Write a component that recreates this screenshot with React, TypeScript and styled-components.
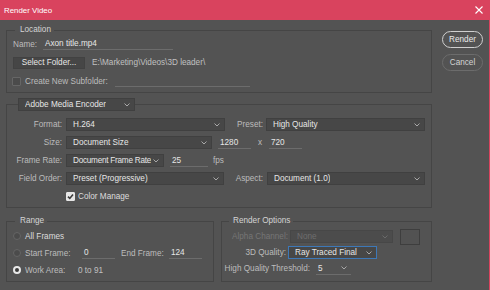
import React, { FC } from "react"
import styled, { createGlobalStyle, css } from "styled-components"

const GlobalStyle = createGlobalStyle`
  html, body {
    margin: 0;
    padding: 0;
    background: #535353;
  }
  * {
    box-sizing: border-box;
  }
`

const PINK = "#d9435e"

//---------------------------PARTS-------------------------------------------//

const Chevron: FC<{ dim?: boolean }> = ({ dim }) => (
  <svg width="6" height="4" viewBox="0 0 6 4">
    <polyline points="0.5,0.5 3,3 5.5,0.5" fill="none" stroke={dim ? "#6a6a6a" : "#a8a8a8"} strokeWidth="1" />
  </svg>
)

interface ISelect {
  w: number
  value: string
  focused?: boolean
  disabled?: boolean
  tight?: boolean
}

const Select: FC<ISelect> = ({ w, value, focused, disabled, tight }) => (
  <SelectBox $w={w} $focused={focused} $disabled={disabled} $tight={tight}>
    <SelectText>{value}</SelectText>
    <Chevron dim={disabled} />
  </SelectBox>
)

const Check: FC<{ checked?: boolean }> = ({ checked }) => (
  <CheckBox $checked={checked}>
    {checked && (
      <svg width="7" height="7" viewBox="0 0 7 7">
        <polyline points="1,3.6 2.8,5.4 6,1.4" fill="none" stroke="#3a3a3a" strokeWidth="1.6" />
      </svg>
    )}
  </CheckBox>
)

export default function App() {
  return (
    <>
      <GlobalStyle />
      <Dialog>
        <TitleBar>
          <Title>Render Video</Title>
          <svg width="8" height="8" viewBox="0 0 8 8">
            <path d="M0.5,0.5 L7.5,7.5 M7.5,0.5 L0.5,7.5" stroke="#fff" strokeWidth="1.1" />
          </svg>
        </TitleBar>

        <Body>
          <Main>
            <Group>
              <Legend $ml={8}>Location</Legend>
              <GroupInner $pt={3} $pb={5} $pl={6} $gap={6}>
                <Row $h={12}>
                  <Label $w={30} $left>Name:</Label>
                  <UInput $w={130}>Axon title.mp4</UInput>
                </Row>
                <Row $h={13}>
                  <Button>Select Folder...</Button>
                  <Path>E:\Marketing\Videos\3D leader\</Path>
                </Row>
                <Row $h={12} style={{ marginLeft: -1 }}>
                  <Check />
                  <Label $w={90} $left $ml={4}>Create New Subfolder:</Label>
                  <UInput $w={135} />
                </Row>
              </GroupInner>
            </Group>

            <Group $mt={5}>
              <SelectLegend>
                <Select w={117} value="Adobe Media Encoder" />
              </SelectLegend>
              <GroupInner $pt={7} $pb={4} $pl={0} $gap={5}>
                <Row $h={13}>
                  <Label $w={55} $mr={4}>Format:</Label>
                  <Select w={159} value="H.264" />
                  <Label $w={38} $mr={3}>Preset:</Label>
                  <Select w={159} value="High Quality" />
                </Row>
                <Row $h={13}>
                  <Label $w={55} $mr={4}>Size:</Label>
                  <Select w={146} value="Document Size" />
                  <UInput $w={33} $ml={6}>1280</UInput>
                  <Times>x</Times>
                  <UInput $w={33}>720</UInput>
                </Row>
                <Row $h={13}>
                  <Label $w={55} $mr={4}>Frame Rate:</Label>
                  <Select w={98} value="Document Frame Rate" tight />
                  <UInput $w={38} $ml={6}>25</UInput>
                  <Label $w={20} $left $ml={5}>fps</Label>
                </Row>
                <Row $h={13}>
                  <Label $w={55} $mr={4}>Field Order:</Label>
                  <Select w={158} value="Preset (Progressive)" />
                  <Label $w={39} $mr={4}>Aspect:</Label>
                  <Select w={158} value="Document (1.0)" />
                </Row>
                <Row $h={13} style={{ paddingLeft: 59 }}>
                  <Check checked />
                  <Value $ml={3}>Color Manage</Value>
                </Row>
              </GroupInner>
            </Group>

            <BottomRow>
              <Group $w={208}>
                <Legend $ml={8}>Range</Legend>
                <GroupInner $pt={4} $pb={5} $pl={6} $gap={5}>
                  <Row $h={12}>
                    <Radio />
                    <Value $ml={4}>All Frames</Value>
                  </Row>
                  <Row $h={12}>
                    <Radio />
                    <Label $w={57} $left $ml={4}>Start Frame:</Label>
                    <UInput $w={33}>0</UInput>
                    <Label $w={48} $left $ml={6}>End Frame:</Label>
                    <UInput $w={33}>124</UInput>
                  </Row>
                  <Row $h={12}>
                    <Radio $checked />
                    <Label $w={53} $left $ml={4}>Work Area:</Label>
                    <Path style={{ marginLeft: 0 }}>0 to 91</Path>
                  </Row>
                </GroupInner>
              </Group>

              <Group $w={211}>
                <Legend $ml={7} $pl={4}>Render Options</Legend>
                <GroupInner $pt={4} $pb={6} $pl={0} $gap={3}>
                  <Row $h={13}>
                    <Label $w={66} $mr={2} $disabled>Alpha Channel:</Label>
                    <Select w={103} value="None" disabled />
                    <Swatch />
                  </Row>
                  <Row $h={13}>
                    <Label $w={64} $mr={2}>3D Quality:</Label>
                    <Select w={89} value="Ray Traced Final" focused />
                  </Row>
                  <Row $h={13}>
                    <Label $w={88} $mr={6}>High Quality Threshold:</Label>
                    <USelect>
                      <span>5</span>
                      <Chevron />
                    </USelect>
                  </Row>
                </GroupInner>
              </Group>
            </BottomRow>
          </Main>

          <Side>
            <PillButton $primary>Render</PillButton>
            <PillButton>Cancel</PillButton>
          </Side>
        </Body>
      </Dialog>
    </>
  )
}

//---------------------------STYLES-------------------------------------------//

const Dialog = styled.div`
  width: 490px;
  height: 290px;
  display: flex;
  flex-direction: column;
  background: #535353;
  border-right: 1px solid ${PINK};
  font-family: "Liberation Sans", Arial, sans-serif;
  font-size: 8.2px;
  color: #e2e2e2;
  overflow: hidden;
`

const TitleBar = styled.div`
  height: 20px;
  flex-shrink: 0;
  background: ${PINK};
  display: flex;
  align-items: center;
  justify-content: space-between;
  padding: 0 6px 0 4px;
`

const Title = styled.span`
  color: #fff;
  font-size: 7.9px;
`

const Body = styled.div`
  flex: 1;
  display: flex;
`

const Main = styled.div`
  width: 432px;
  padding: 5px 0 0 6px;
  display: flex;
  flex-direction: column;
`

const Side = styled.div`
  margin-left: 10px;
  padding-top: 11px;
  display: flex;
  flex-direction: column;
  gap: 6px;
`

const Group = styled.fieldset<{ $w?: number; $mt?: number }>`
  margin: ${p => p.$mt || 0}px 0 0 0;
  padding: 0;
  min-width: 0;
  width: ${p => (p.$w ? `${p.$w}px` : "auto")};
  border: 1px solid #454545;
`

const Legend = styled.legend<{ $ml: number; $pl?: number }>`
  margin-left: ${p => p.$ml}px;
  padding: 0 3px 0 ${p => p.$pl ?? 5}px;
  line-height: 10px;
  color: #d4d4d4;
`

const SelectLegend = styled.legend`
  margin-left: 11px;
  padding: 0;
  line-height: 0;
`

const GroupInner = styled.div<{ $pt: number; $pb: number; $pl: number; $gap: number }>`
  display: flex;
  flex-direction: column;
  gap: ${p => p.$gap}px;
  padding: ${p => p.$pt}px 0 ${p => p.$pb}px ${p => p.$pl}px;
`

const Row = styled.div<{ $h: number }>`
  height: ${p => p.$h}px;
  display: flex;
  align-items: center;
  white-space: nowrap;
`

const BottomRow = styled.div`
  margin-top: 8px;
  display: flex;
  gap: 7px;
`

interface ILabel {
  $w: number
  $left?: boolean
  $mr?: number
  $ml?: number
  $disabled?: boolean
}

const Label = styled.span<ILabel>`
  flex-shrink: 0;
  width: ${p => p.$w}px;
  margin-right: ${p => p.$mr || 0}px;
  margin-left: ${p => p.$ml || 0}px;
  text-align: ${p => (p.$left ? "left" : "right")};
  color: ${p => (p.$disabled ? "#767676" : "#bcbcbc")};
`

const Value = styled.span<{ $ml?: number }>`
  margin-left: ${p => p.$ml || 0}px;
  color: #dcdcdc;
`

const Path = styled.span`
  margin-left: 7px;
  color: #c0c0c0;
`

const Times = styled.span`
  width: 18px;
  text-align: center;
  color: #bcbcbc;
`

const SelectText = styled.span`
  min-width: 0;
  overflow: hidden;
`

const SelectBox = styled.div<{ $w: number; $focused?: boolean; $disabled?: boolean; $tight?: boolean }>`
  flex-shrink: 0;
  width: ${p => p.$w}px;
  height: 13px;
  display: flex;
  align-items: center;
  justify-content: space-between;
  gap: 2px;
  padding: 0 4px 0 6px;
  background: #474747;
  border: 1px solid ${p => (p.$focused ? "#3d78b8" : "#404040")};
  color: ${p => (p.$disabled ? "#6e6e6e" : "#e6e6e6")};
  line-height: 11px;
  white-space: nowrap;
  overflow: hidden;
  letter-spacing: ${p => (p.$tight ? "-0.25px" : "normal")};
  svg {
    flex-shrink: 0;
  }
  ${p =>
    p.$disabled &&
    css`
      background: #4c4c4c;
      border-color: #474747;
    `}
`

const UInput = styled.div<{ $w: number; $ml?: number }>`
  flex-shrink: 0;
  width: ${p => p.$w}px;
  height: 12px;
  margin-left: ${p => p.$ml || 0}px;
  padding-left: 2px;
  border-bottom: 1px solid #6c6c6c;
  color: #e6e6e6;
  line-height: 11px;
`

const USelect = styled.div`
  width: 35px;
  height: 12px;
  display: flex;
  align-items: center;
  justify-content: space-between;
  padding: 0 4px 0 2px;
  border-bottom: 1px solid #6c6c6c;
  color: #e6e6e6;
`

const Button = styled.div`
  width: 72px;
  height: 12px;
  display: flex;
  align-items: center;
  justify-content: center;
  background: #464646;
  border: 1px solid #424242;
  color: #e6e6e6;
`

const CheckBox = styled.div<{ $checked?: boolean }>`
  width: 9px;
  height: 9px;
  flex-shrink: 0;
  display: flex;
  align-items: center;
  justify-content: center;
  border-radius: 1px;
  border: 1px solid ${p => (p.$checked ? "#e6e6e6" : "#666")};
  background: ${p => (p.$checked ? "#e6e6e6" : "#4b4b4b")};
`

const Radio = styled.div<{ $checked?: boolean }>`
  width: 8px;
  height: 8px;
  flex-shrink: 0;
  border-radius: 50%;
  border: ${p => (p.$checked ? "2.5px solid #e8e8e8" : "1px solid #656565")};
  background: ${p => (p.$checked ? "#3a3a3a" : "#4b4b4b")};
`

const Swatch = styled.div`
  width: 20px;
  height: 16px;
  flex-shrink: 0;
  margin-left: 7px;
  border: 1px solid #3e3e3e;
  background: #525252;
`

const PillButton = styled.div<{ $primary?: boolean }>`
  width: 41px;
  height: 17px;
  display: flex;
  align-items: center;
  justify-content: center;
  border-radius: 9px;
  border: 1px solid ${p => (p.$primary ? "#cfcfcf" : "#6c6c6c")};
  color: ${p => (p.$primary ? "#e8e8e8" : "#d4d4d4")};
`
